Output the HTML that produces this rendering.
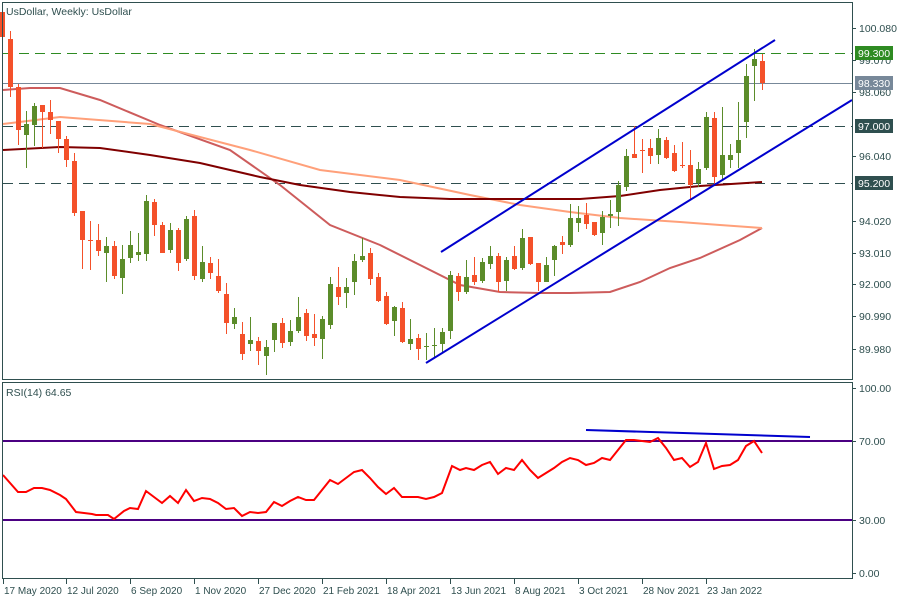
<!DOCTYPE html><html><head><meta charset="utf-8"><style>
body{margin:0;background:#fff;width:900px;height:600px;overflow:hidden}
svg{display:block;font-family:"Liberation Sans","DejaVu Sans",sans-serif}
</style></head><body>
<svg id="s" width="900" height="600" xmlns="http://www.w3.org/2000/svg">
<rect width="900" height="600" fill="#fff"/>
<g id="c"></g>
<g stroke="#2f4f4f" fill="none" stroke-width="1">
<rect x="2.5" y="2.5" width="850" height="377"/>
<rect x="2.5" y="382.5" width="850" height="196"/>
</g>
<g font-size="10.5" fill="#2f4f4f">
<text x="6" y="15">UsDollar, Weekly:  UsDollar</text>
<text x="6" y="396">RSI(14) 64.65</text>
</g>
</svg>
<script>
const NS="http://www.w3.org/2000/svg",g=document.getElementById('c');
function el(t,a,txt){const e=document.createElementNS(NS,t);for(const k in a)e.setAttribute(k,a[k]);if(txt)e.textContent=txt;g.appendChild(e);return e;}
el('line',{x1:3,y1:53.5,x2:852,y2:53.5,stroke:'#2e8b22','stroke-dasharray':'10,6'});
el('line',{x1:3,y1:83.5,x2:852,y2:83.5,stroke:'#778899'});
el('line',{x1:3,y1:126.5,x2:852,y2:126.5,stroke:'#2f4f4f','stroke-dasharray':'10,6'});
el('line',{x1:3,y1:183.5,x2:852,y2:183.5,stroke:'#2f4f4f','stroke-dasharray':'10,6'});
function pl(p,c,w){el('polyline',{points:p,fill:'none',stroke:c,'stroke-width':w});}
pl("3,90 30,88 60,88 100,100 160,125 230,150 280,185 330,225 380,245 420,265 460,285 500,292 540,293 570,293 610,292 640,282 670,268 700,258 740,240 762,228","#cd5c5c",2);
pl("3,124 60,117 150,124 250,150 320,170 400,180 470,195 520,205 570,212 620,218 680,222 720,225 762,228","#ffa07a",2);
pl("3,150 60,147 100,148 150,155 200,163 260,177 300,185 350,192 400,197 450,199 520,199 580,199 620,196 660,190 700,186 762,182","#800000",2);
const C=[[2,12,37,8,40],[10,39,87,31,97],[18,87,130,84,145],[26,135,124,111,168],[34,125,106,103,146],[42,105,112,105,148],[50,112,120,100,134],[58,121,139,121,153],[66,139,160,136,167],[74,161,213,153,216],[82,211,240,211,269],[90,240,241,221,270],[98,240,251,224,256],
[106,253,246,237,282],[114,246,276,241,279],[122,278,259,245,294],[130,258,245,231,263],[138,255,252,233,261],[146,254,201,195,261],[154,202,225,199,236],[162,225,253,222,253],[170,250,230,223,253],[178,230,263,228,271],[186,259,219,216,261],[194,216,276,210,280],[202,279,262,246,282],[210,263,273,257,279],[218,276,291,259,293],[226,294,323,283,334],[234,324,317,308,329],[242,334,354,322,360],[250,344,340,317,351],[258,341,351,337,365],[266,356,347,340,375],[274,340,323,323,352],[282,323,343,318,348],[290,342,331,320,346],[298,331,317,297,333],[306,313,336,309,341],[314,334,338,314,346],[322,339,319,316,359],[330,325,284,277,329],[338,287,297,267,305],[346,293,287,278,308],[354,282,261,254,295],[362,260,256,238,262],[370,253,279,248,285],[378,277,301,273,302],[386,296,324,292,325],[394,321,307,306,336],
[402,308,342,302,343],[410,344,339,319,350],[418,338,349,334,360],[426,347,346,333,360],[434,346,345,328,358],[442,344,332,328,352],[450,331,275,271,339],[458,276,292,273,301],[466,292,277,260,294],[474,275,282,257,285],[482,281,262,258,283],[490,264,256,246,269],[498,256,282,253,292],[506,281,260,257,291],[514,256,269,246,270],[522,268,238,229,270],[530,237,264,237,265],[538,263,282,263,291],[546,282,265,257,282],[554,260,246,245,276],[562,242,245,236,254],[570,245,218,204,247],[578,223,218,206,232],[586,215,224,203,229],[594,222,235,222,236],[602,233,217,211,245],[610,216,214,200,228],[618,212,185,181,226],[626,187,156,149,191],[634,154,158,126,158],[642,150,151,139,173],[650,148,156,139,164],[658,155,138,129,164],[666,140,158,137,159],[674,153,171,145,172],[682,165,166,142,168],[690,165,185,150,199],[698,183,169,162,187],[706,168,117,112,170],[714,118,177,112,185],[722,175,155,107,180],[730,160,155,144,168],[738,153,140,102,168],[746,122,76,64,138],[754,66,59,49,101],[762,61,83,54,90]];
C.forEach(c=>{const [x,o,cl,h,l]=c;const up=cl<o;const col=up?'#5b8c2a':'#f4512a';
const t=Math.min(o,cl),b=Math.max(o,cl);
el('line',{x1:x+.5,y1:h,x2:x+.5,y2:l,stroke:col});
el('rect',{x:x-2,y:t,width:5,height:Math.max(1,b-t),fill:col});});
el('line',{x1:441,y1:252,x2:775,y2:40,stroke:'#0000cd','stroke-width':2});
el('line',{x1:426,y1:363,x2:852,y2:100,stroke:'#0000cd','stroke-width':2});
el('line',{x1:3,y1:441,x2:852,y2:441,stroke:'#4b0082','stroke-width':2});
el('line',{x1:3,y1:520,x2:852,y2:520,stroke:'#4b0082','stroke-width':2});
el('line',{x1:586,y1:430,x2:810,y2:437,stroke:'#0000cd','stroke-width':2});
pl("3,475 18,492 26,492 34,488 42,488 50,490 60,495 66,499 76,512 84,513 92,514 96,515 108,515 114,519 124,511 130,508 138,509 146,491 162,503 170,496 178,503 186,490 194,501 202,498 210,499 218,503 226,509 234,508 242,516 250,512 258,513 266,512 274,502 282,506 290,501 298,497 306,500 314,500 322,490 330,480 338,484 346,478 354,472 362,470 370,478 378,487 386,494 394,488 402,497 410,497 418,497 426,499 434,497 442,493 452,466 460,470 466,468 474,470 482,465 490,462 498,474 506,468 514,470 522,460 530,470 538,478 546,473 554,468 562,462 570,458 578,460 586,465 594,463 602,458 610,460 618,450 626,440 634,440 642,441 650,442 658,438 666,448 674,460 682,458 690,467 698,462 706,443 714,469 722,466 730,465 738,460 746,446 754,441 762,453","#ff0000",2);
const ax=[["100.080",28],["99.070",60],["98.060",92],["96.040",156],["94.020",221],["93.010",253],["92.000",284],["90.990",316],["89.980",349],["100.00",388],["70.00",441],["30.00",520],["0.00",573]];
ax.forEach(a=>{el('line',{x1:852,y1:a[1]+.5,x2:856,y2:a[1]+.5,stroke:'#2f4f4f'});el('text',{x:859,y:a[1]+4,'font-size':10.5,fill:'#2f4f4f'},a[0]);});
function box(t,y,bg){el('rect',{x:855,y:y-7,width:38,height:14,fill:bg});el('text',{x:858,y:y+4,'font-size':10.5,fill:'#fff'},t);}
box("99.300",53,'#2e8b22');box("98.330",83,'#778899');box("97.000",126,'#2f4f4f');box("95.200",183,'#2f4f4f');
const d=[["17 May 2020",3],["12 Jul 2020",66],["6 Sep 2020",130],["1 Nov 2020",194],["27 Dec 2020",258],["21 Feb 2021",322],["18 Apr 2021",386],["13 Jun 2021",450],["8 Aug 2021",514],["3 Oct 2021",578],["28 Nov 2021",642],["23 Jan 2022",706]];
d.forEach(a=>{el('line',{x1:a[1]+.5,y1:579,x2:a[1]+.5,y2:584,stroke:'#2f4f4f'});el('text',{x:a[1]+1,y:594,'font-size':10,fill:'#2f4f4f'},a[0]);});
</script>
</body></html>
